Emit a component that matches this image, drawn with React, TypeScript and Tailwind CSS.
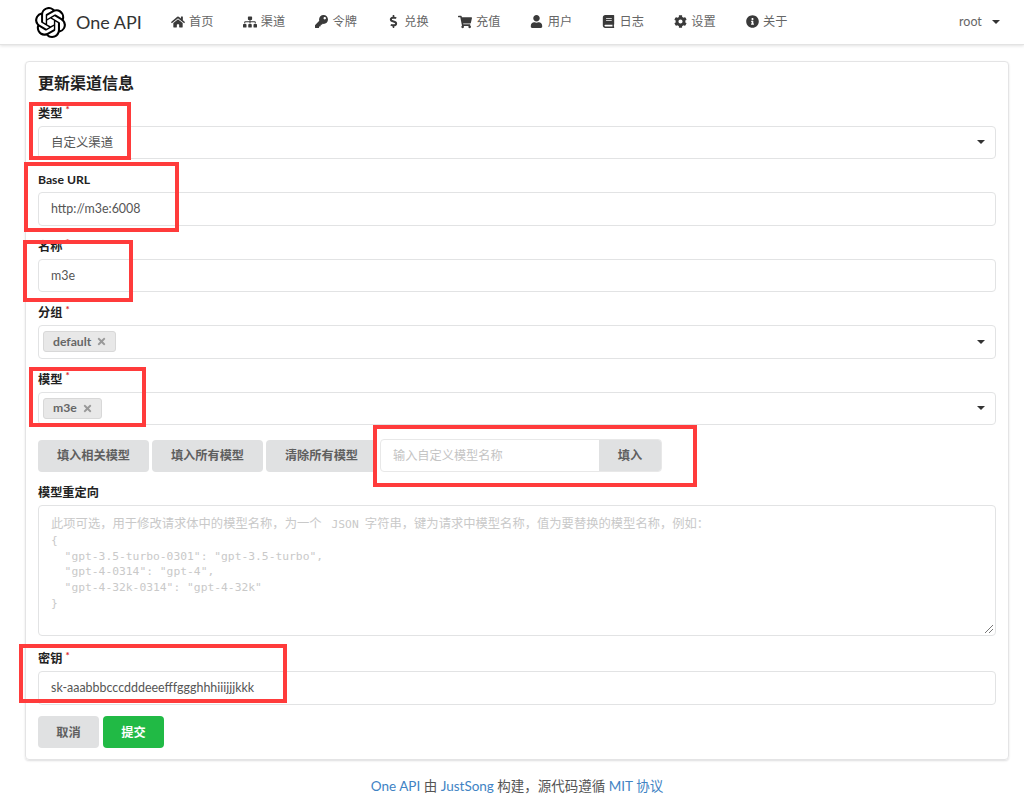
import type { ReactNode } from 'react';
import { FaBook, FaCog, FaDollarSign, FaHome, FaInfoCircle, FaKey, FaShoppingCart, FaSitemap, FaTimes, FaUser } from 'react-icons/fa';
import { SiOpenai } from 'react-icons/si';

const navItems = [
  { label: '首页', icon: <FaHome size={14} /> },
  { label: '渠道', icon: <FaSitemap size={14} /> },
  { label: '令牌', icon: <FaKey size={13} /> },
  { label: '兑换', icon: <FaDollarSign size={13} /> },
  { label: '充值', icon: <FaShoppingCart size={14} /> },
  { label: '用户', icon: <FaUser size={13} /> },
  { label: '日志', icon: <FaBook size={13} /> },
  { label: '设置', icon: <FaCog size={13} /> },
  { label: '关于', icon: <FaInfoCircle size={13} /> },
];

const font = "font-['Lato','Noto_Sans_CJK_SC',sans-serif]";

function Caret() {
  return <span className="ml-auto h-0 w-0 border-x-[4px] border-t-[4px] border-x-transparent border-t-[#333]" />;
}

function Label({ text, required }: { text: string; required?: boolean }) {
  return (
    <div className="mb-[4px] flex h-[17px] items-center text-[12.2px] leading-[17px] font-bold text-[#222]">
      {text}
      {required && <span className="mb-[8px] ml-[3px] text-[10px] leading-[10px] text-[#db2828]">*</span>}
    </div>
  );
}

function Input({ value }: { value: string }) {
  return (
    <div className="flex h-[33.5px] items-center rounded-[4px] border border-[#e2e3e4] pt-[1px] pl-[12px] text-[12.45px] text-[#555]">
      {value}
    </div>
  );
}

function Select({ children }: { children: ReactNode }) {
  return (
    <div className="flex h-[33.5px] items-center rounded-[4px] border border-[#e2e3e4] pr-[10px] pl-[4px] text-[12.45px] text-[#555]">
      {children}
      <Caret />
    </div>
  );
}

function Tag({ text }: { text: string }) {
  return (
    <span className="flex h-[21px] items-center rounded-[3px] border border-[#d8d8d8] bg-[#e8e8e8] pr-[8px] pl-[9px] text-[12.2px] font-bold text-[#666]">
      {text}
      <FaTimes size={11} className="ml-[5px] text-[#999]" />
    </span>
  );
}

function GrayButton({ text, width }: { text: string; width: string }) {
  return (
    <button className={`flex h-[32px] items-center justify-center rounded-[4px] bg-[#e0e1e2] pt-[1px] text-[12.2px] font-bold text-[#5f5f5f] ${width}`}>
      {text}
    </button>
  );
}

export default function App() {
  return (
    <div className={`relative h-[804px] overflow-hidden bg-white ${font}`}>
      <nav className="flex h-[45px] items-center border-b border-[#e3e3e3] bg-white shadow-[0_1px_3px_rgba(0,0,0,0.12)]">
        <div className="ml-[35px] flex w-[121px] items-center">
          <SiOpenai size={31} className="text-black" />
          <span className="ml-[10px] text-[18px] text-[#333]">One API</span>
        </div>
        {navItems.map((item) => (
          <a key={item.label} className="flex w-[71.75px] items-center pl-[14px] text-[12.2px] text-[#666]">
            <span className="flex w-[16px] justify-center text-[#3a3a3a]">{item.icon}</span>
            <span className="ml-[3px]">{item.label}</span>
          </a>
        ))}
        <div className="ml-auto flex w-[65px] items-center pr-[24px] text-[12.5px] text-[#666]">
          root
          <Caret />
        </div>
      </nav>

      <main className="mt-[16px] mr-[15px] ml-[25px] h-[699px] rounded-[4px] border border-[#e4e4e5] px-[12px] shadow-[0_1px_2px_rgba(34,36,38,0.15)]">
        <h2 className="mt-[10px] mb-[10.7px] h-[22px] text-[16px] leading-[22px] font-bold text-[#222]">更新渠道信息</h2>

        <div className="flex flex-col gap-[12px]">
          <div>
            <Label text="类型" required />
            <Select>
              <span className="pt-[1px] pl-[8px]">自定义渠道</span>
            </Select>
          </div>
          <div>
            <Label text="Base URL" />
            <Input value="http://m3e:6008" />
          </div>
          <div>
            <Label text="名称" required />
            <Input value="m3e" />
          </div>
          <div>
            <Label text="分组" required />
            <Select>
              <Tag text="default" />
            </Select>
          </div>
          <div>
            <Label text="模型" required />
            <Select>
              <Tag text="m3e" />
            </Select>
          </div>
        </div>

        <div className="mt-[14px] flex items-center gap-[3px]">
          <GrayButton text="填入相关模型" width="w-[111px]" />
          <GrayButton text="填入所有模型" width="w-[111px]" />
          <GrayButton text="清除所有模型" width="w-[111px]" />
          <div className="flex h-[33px] w-[282px] overflow-hidden rounded-[4px] border border-[#e8e8e8]">
            <span className="flex flex-1 items-center pt-[1px] pl-[12px] text-[12.2px] text-[#c4c4c4]">输入自定义模型名称</span>
            <button className="w-[62px] bg-[#e0e1e2] pt-[1px] text-[12.2px] font-bold text-[#5f5f5f]">填入</button>
          </div>
        </div>

        <div className="mt-[12px]">
          <Label text="模型重定向" />
          <div className="relative h-[131px] rounded-[4px] border border-[#e2e3e4] pt-[9.5px] pl-[12px] text-[12.3px] leading-[15.9px] whitespace-pre text-[#c9c9c9]">
            <div>
              此项可选，用于修改请求体中的模型名称，为一个 <span className="mr-[3px] font-['DejaVu_Sans_Mono',monospace] text-[11.3px]"> JSON</span> 字符串，键为请求中模型名称，值为要替换的模型名称，例如：
            </div>
            <div className="font-['DejaVu_Sans_Mono',monospace] text-[11.3px]">
              {'{\n  "gpt-3.5-turbo-0301": "gpt-3.5-turbo",\n  "gpt-4-0314": "gpt-4",\n  "gpt-4-32k-0314": "gpt-4-32k"\n}'}
            </div>
            <svg className="absolute right-[1px] bottom-[1px]" width="10" height="10" viewBox="0 0 10 10">
              <path d="M1 9 9 1M5 9 9 5" stroke="#777" strokeWidth="1" fill="none" />
            </svg>
          </div>
        </div>

        <div className="mt-[14px]">
          <Label text="密钥" required />
          <Input value="sk-aaabbbcccdddeeefffggghhhiiijjjkkk" />
        </div>

        <div className="mt-[11.5px] flex gap-[4px]">
          <GrayButton text="取消" width="w-[61px]" />
          <button className="h-[32px] w-[61px] rounded-[4px] bg-[#21ba45] pt-[1px] text-[12.2px] font-bold text-white">提交</button>
        </div>
      </main>

      <footer className="mt-[16px] mr-[15px] ml-[25px] text-center text-[13.5px] text-[#555]">
        <a className="text-[#4183c4]">One API</a> 由 <a className="text-[#4183c4]">JustSong</a> 构建，源代码遵循 <a className="text-[#4183c4]">MIT 协议</a>
      </footer>

      {/* hand-drawn red annotations on top of the screenshot */}
      <div className="absolute top-[102px] left-[29px] h-[58px] w-[102px] border-[4px] border-[#ff3b3b]" />
      <div className="absolute top-[162px] left-[24px] h-[70px] w-[155px] border-[4px] border-[#ff3b3b]" />
      <div className="absolute top-[240px] left-[23px] h-[62px] w-[110px] border-[4px] border-[#ff3b3b]" />
      <div className="absolute top-[367px] left-[29px] h-[60px] w-[117px] border-[4px] border-[#ff3b3b]" />
      <div className="absolute top-[425px] left-[373px] h-[62px] w-[324px] border-[4px] border-[#ff3b3b]" />
      <div className="absolute top-[644px] left-[19px] h-[59px] w-[268px] border-[4px] border-[#ff3b3b]" />
    </div>
  );
}
